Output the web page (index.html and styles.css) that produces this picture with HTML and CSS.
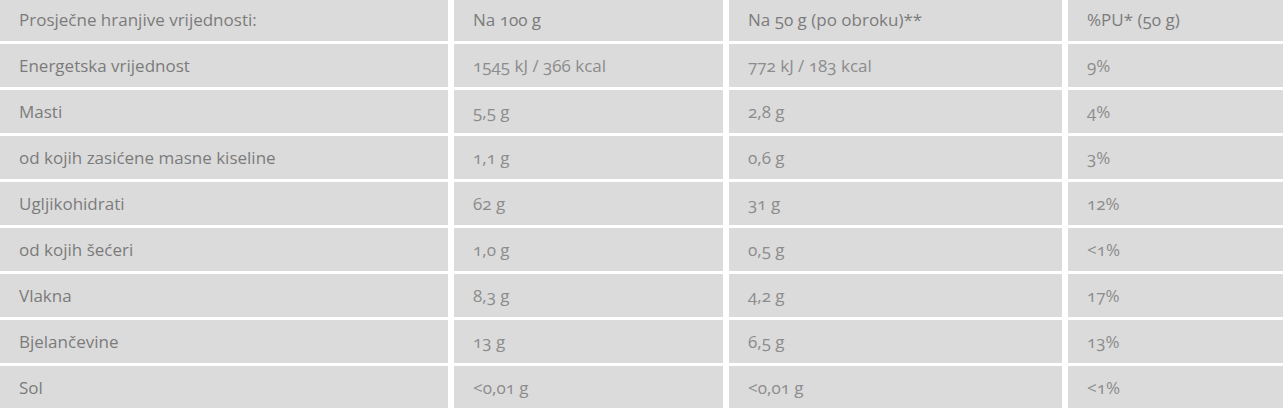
FILE: index.html
```html
<!DOCTYPE html>
<html lang="hr">
<head>
<meta charset="utf-8">
<title>Prosječne hranjive vrijednosti</title>
<link rel="stylesheet" href="styles.css">
</head>
<body>
<div class="table">
  <div class="cell label">Prosječne hranjive vrijednosti:</div>
  <div class="cell head">Na 100 g</div>
  <div class="cell head">Na 50 g (po obroku)**</div>
  <div class="cell head">%PU* (50 g)</div>

  <div class="cell label">Energetska vrijednost</div>
  <div class="cell val">1545 kJ / 366 kcal</div>
  <div class="cell val">772 kJ / 183 kcal</div>
  <div class="cell val">9%</div>

  <div class="cell label">Masti</div>
  <div class="cell val">5,5 g</div>
  <div class="cell val">2,8 g</div>
  <div class="cell val">4%</div>

  <div class="cell label">od kojih zasićene masne kiseline</div>
  <div class="cell val">1,1 g</div>
  <div class="cell val">0,6 g</div>
  <div class="cell val">3%</div>

  <div class="cell label">Ugljikohidrati</div>
  <div class="cell val">62 g</div>
  <div class="cell val">31 g</div>
  <div class="cell val">12%</div>

  <div class="cell label">od kojih šećeri</div>
  <div class="cell val">1,0 g</div>
  <div class="cell val">0,5 g</div>
  <div class="cell val">&lt;1%</div>

  <div class="cell label">Vlakna</div>
  <div class="cell val">8,3 g</div>
  <div class="cell val">4,2 g</div>
  <div class="cell val">17%</div>

  <div class="cell label">Bjelančevine</div>
  <div class="cell val">13 g</div>
  <div class="cell val">6,5 g</div>
  <div class="cell val">13%</div>

  <div class="cell label">Sol</div>
  <div class="cell val">&lt;0,01 g</div>
  <div class="cell val">&lt;0,01 g</div>
  <div class="cell val">&lt;1%</div>
</div>
</body>
</html>
```

FILE: styles.css
```css
html, body {
  margin: 0;
  padding: 0;
  background: #ffffff;
}

body {
  font-family: "Open Sans", "Noto Sans", sans-serif;
  font-size: 17px;
  font-variant-numeric: oldstyle-nums;
  overflow: hidden;
}

.table {
  display: grid;
  grid-template-columns: 448px 269px 333px 1fr;
  grid-auto-rows: 43px;
  column-gap: 6px;
  row-gap: 3px;
  margin-top: -2px;
}

.cell {
  background: #dbdbdb;
  display: flex;
  align-items: center;
  padding-left: 19px;
  white-space: nowrap;
}

.label,
.head {
  color: #7b7b7b;
  font-weight: 500;
}

.val {
  color: #8c8c8c;
}
```
